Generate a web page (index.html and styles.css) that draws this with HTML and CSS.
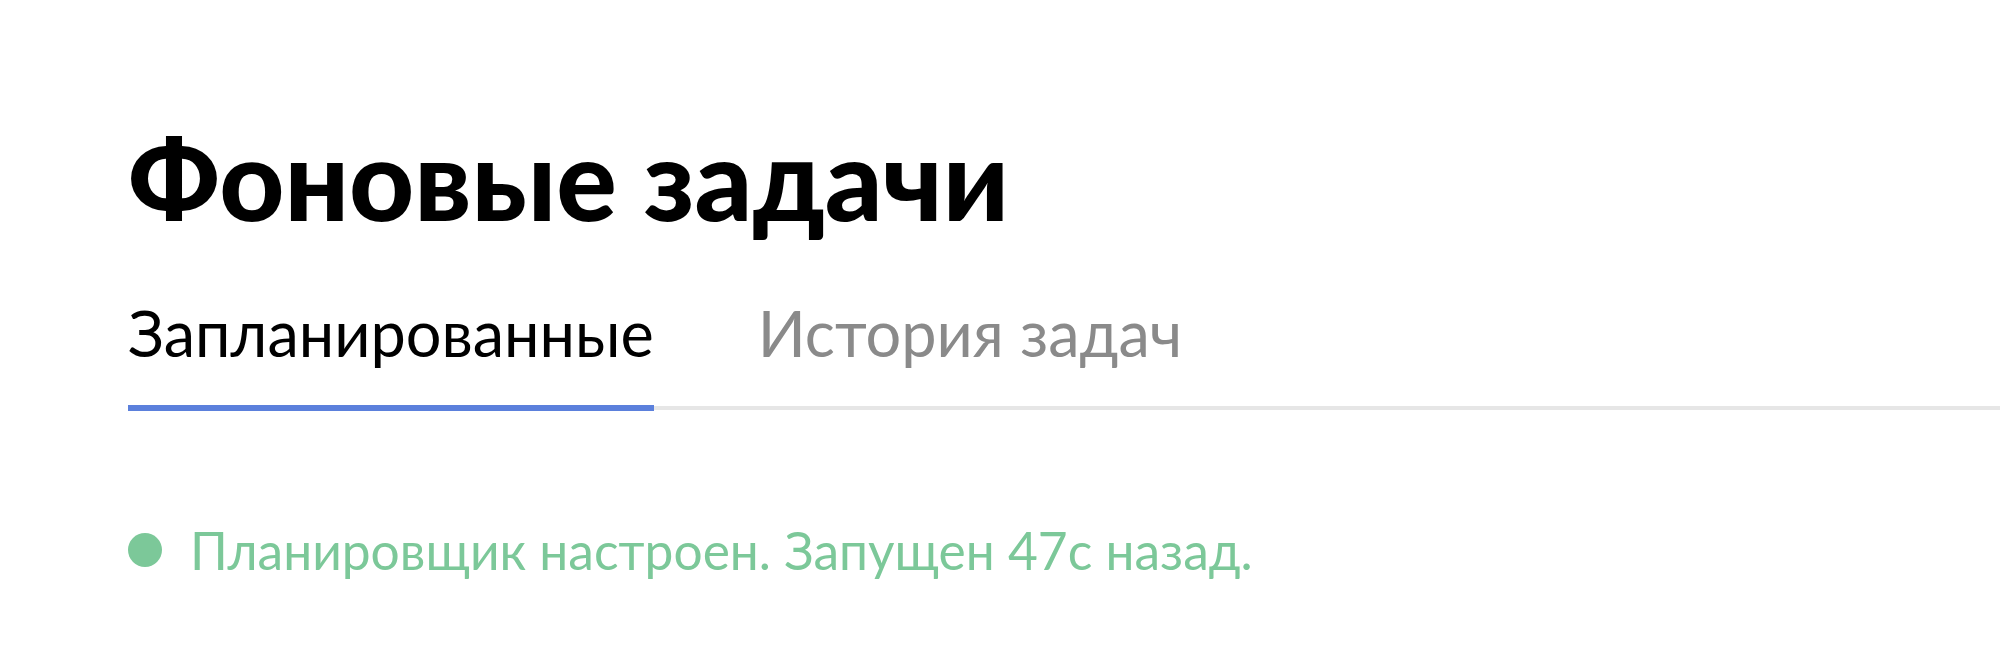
FILE: index.html
```html
<!DOCTYPE html>
<html lang="ru">
<head>
<meta charset="utf-8">
<title>Фоновые задачи</title>
<link rel="stylesheet" href="styles.css">
</head>
<body>
<main class="page">
  <h1 class="title">Фоновые задачи</h1>
  <nav class="tabs">
    <a class="tab tab-active">Запланированные</a>
    <a class="tab">История задач</a>
  </nav>
  <p class="status"><span class="dot"></span>Планировщик настроен. Запущен 47с назад.</p>
</main>
</body>
</html>
```
FILE: styles.css
```css
html, body {
  margin: 0;
  padding: 0;
  background: #ffffff;
}
body {
  font-family: "Lato", "Noto Sans", sans-serif;
}
.page {
  padding: 112px 0 0 128px;
}
.title {
  margin: 0;
  font-size: 113px;
  font-weight: 900;
  line-height: 130px;
  color: #000000;
}
.tabs {
  display: flex;
  gap: 104px;
  margin-top: 51px;
  border-bottom: 4px solid #e6e6e6;
}
.tab {
  display: block;
  font-size: 63px;
  line-height: 80px;
  padding-bottom: 32px;
  color: #8a8a8a;
  margin-bottom: -5px;
  border-bottom: 6px solid transparent;
}
.tab-active {
  color: #000000;
  border-bottom-color: #5b80dc;
}
.status {
  display: flex;
  align-items: center;
  gap: 28px;
  margin: 108px 0 0;
  font-size: 51.5px;
  line-height: 64px;
  color: #7cc899;
}
.dot {
  width: 34px;
  height: 34px;
  border-radius: 50%;
  background: #7cc899;
  flex: none;
}
```
